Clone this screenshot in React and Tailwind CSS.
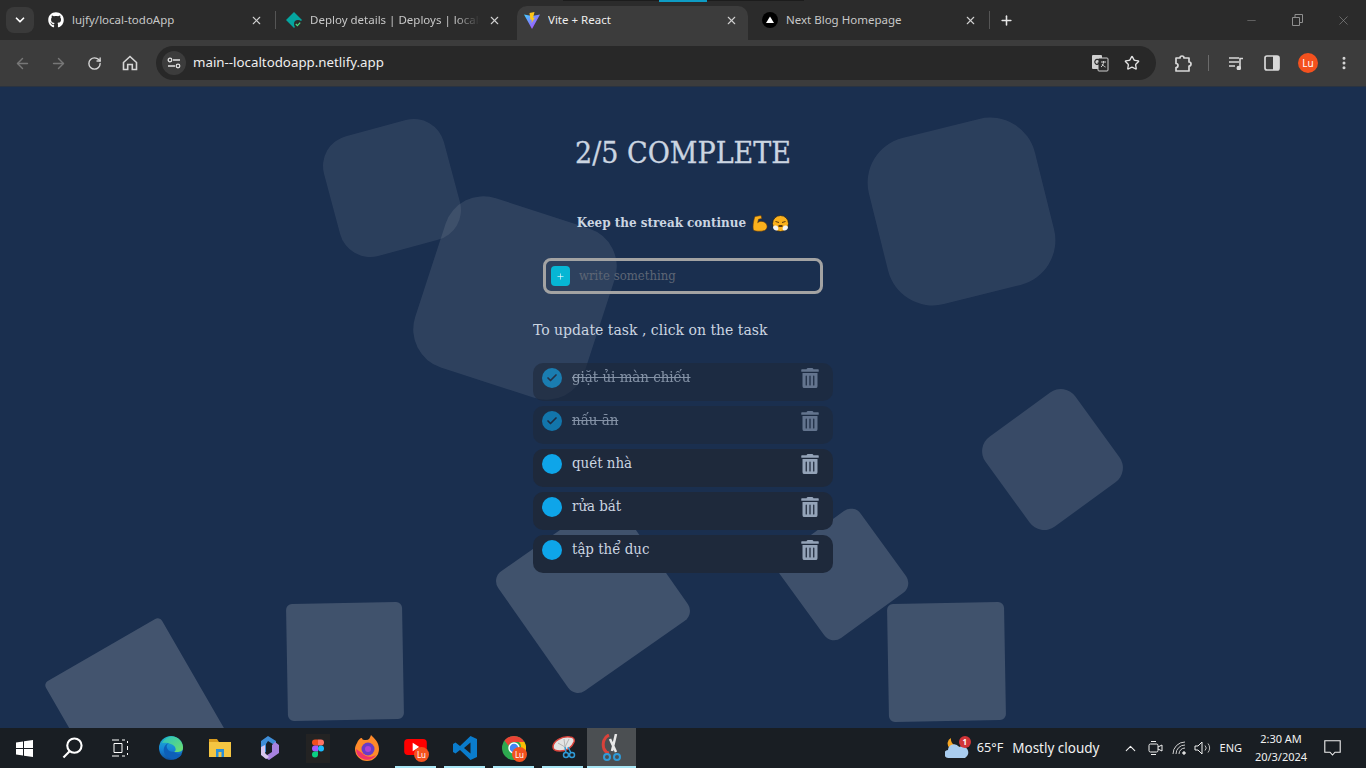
import { ArrowLeft, ArrowRight, RotateCw, Plus, X, Minus, Star, ChevronDown, ChevronUp, EllipsisVertical, Check } from 'lucide-react';
import { FaGithub, FaTrashAlt } from 'react-icons/fa';

const uiFont = 'font-["Noto_Sans",sans-serif]';
const slab = 'font-["DejaVu_Serif_Condensed","DejaVu_Serif",serif]';

const tasks = [
    { id: 1, text: 'giặt ủi màn chiếu', done: true },
    { id: 2, text: 'nấu ăn', done: true },
    { id: 3, text: 'quét nhà', done: false },
    { id: 4, text: 'rửa bát', done: false },
    { id: 5, text: 'tập thể dục', done: false },
];

function NetlifyIcon() {
    return (
        <svg width="16" height="16" viewBox="0 0 16 16" className="shrink-0">
            <path d="M8 0 16 8 8 16 0 8Z" fill="#05a5a0" />
            <circle cx="12" cy="12" r="4" fill="#2b2b2b" />
            <path d="M9.8 12l1.6 1.6 2.8-3" stroke="#4ade80" strokeWidth="1.3" fill="none" />
        </svg>
    );
}

function ViteIcon() {
    return (
        <svg width="16" height="17" viewBox="0 0 16 17" className="shrink-0">
            <defs>
                <linearGradient id="vitePurple" x1="0" y1="0" x2="1" y2="1">
                    <stop offset="0" stopColor="#41d1ff" />
                    <stop offset="1" stopColor="#bd34fe" />
                </linearGradient>
            </defs>
            <path d="M0 2.500 8 4 16 2.500 8 17Z" fill="url(#vitePurple)" />
            <path d="M10.500 0 5.500 1 6.500 8 8 7.500 7.500 11 11 5.500 9 6Z" fill="#ffc517" />
        </svg>
    );
}

function NextIcon() {
    return (
        <svg width="16" height="16" viewBox="0 0 16 16" className="shrink-0">
            <circle cx="8" cy="8" r="8" fill="#000" />
            <path d="M8 4.500 12 11H4Z" fill="#fff" />
        </svg>
    );
}

function Tab({ icon, title, active, fade, className, iconClass, closeClass, sep }) {
    return (
        <div className={`relative flex items-center h-full pb-[6px] ${className} ${active ? 'bg-[#3c3c3c] rounded-t-[10px] text-[#eeeeee]' : 'text-[#c8c8c8]'}`}>
            <span className={`flex items-center ${iconClass}`}>{icon}</span>
            <span className={`ml-[8px] text-[11.500px] whitespace-nowrap overflow-hidden flex-1 ${fade ? '[mask-image:linear-gradient(to_right,black_85%,transparent)]' : ''}`}>{title}</span>
            <X size={13} strokeWidth={2} className={`ml-[8px] shrink-0 text-[#d0d0d0] ${closeClass}`} />
            {sep && <span className="w-px h-[18px] bg-[#555] shrink-0" />}
        </div>
    );
}

function TabStrip() {
    return (
        <div className={`relative flex items-end h-[40px] bg-[#2b2b2b] ${uiFont}`}>
            <span className="absolute left-[563px] top-0 w-[241px] h-[1px] bg-[#1c1c1c]" />
            <span className="absolute left-[659px] top-0 w-[48px] h-[2px] bg-[#0e9cc4]" />
            <div className="flex items-center h-full pl-[6px] w-[34px] box-content shrink-0">
                <div className="flex items-center justify-center w-[28px] h-[26px] rounded-lg bg-[#3a3a3a]">
                    <ChevronDown size={14} strokeWidth={3} className="text-white" />
                </div>
            </div>
            <div className="flex items-center h-[34px]">
                <Tab className="w-[236px]" iconClass="ml-[8px]" closeClass="mr-[12px]" sep icon={<FaGithub size={16} className="text-white" />} title="lujfy/local-todoApp" />
                <Tab className="w-[241px]" iconClass="ml-[10px]" closeClass="mr-[16px]" fade icon={<NetlifyIcon />} title="Deploy details | Deploys | localt" />
                <Tab className="w-[231px]" iconClass="ml-[7px]" closeClass="mr-[10px]" active icon={<ViteIcon />} title="Vite + React" />
                <Tab className="w-[242px]" iconClass="ml-[14px]" closeClass="mr-[12px]" sep icon={<NextIcon />} title="Next Blog Homepage" />
                <Plus size={15} strokeWidth={2.500} className="ml-[9px] mb-[6px] text-[#e6e6e6]" />
            </div>
            <div className="flex items-center h-full ml-auto text-[#8f8f8f]">
                <div className="w-[46px] flex justify-center"><Minus size={13} strokeWidth={1} /></div>
                <div className="w-[46px] flex justify-center">
                    <svg width="11" height="12" viewBox="0 0 11 12" fill="none" stroke="currentColor"><path d="M.5 3.500h7v8h-7zM3 3V.5h7.500v8H8" /></svg>
                </div>
                <div className="w-[46px] flex justify-center"><X size={15} strokeWidth={1} /></div>
            </div>
        </div>
    );
}

function HomeIcon() {
    return (
        <svg width="16" height="16" viewBox="0 0 16 16" fill="none" stroke="#d6d6d6" strokeWidth="1.600">
            <path d="M1.500 7.500 8 1.500l6.500 6V14.500h-4.200V9.500H5.700v5H1.500Z" />
        </svg>
    );
}

function SiteTuneIcon() {
    return (
        <svg width="14" height="12" viewBox="0 0 14 12" fill="none" stroke="#e2e2e2" strokeWidth="1.300">
            <circle cx="3" cy="3" r="1.800" />
            <path d="M6 3h7M1 9h7" />
            <circle cx="11" cy="9" r="1.800" />
        </svg>
    );
}

function TranslateIcon() {
    return (
        <svg width="18" height="18" viewBox="0 0 18 18">
            <rect x="1" y="1" width="10" height="14" rx="1" fill="#cfcfcf" />
            <rect x="7" y="4" width="10" height="13" rx="1" fill="#2a2a2a" stroke="#cfcfcf" />
            <path d="M8 6a2.500 2.500 0 1 0 .5 3H6.500" stroke="#2a2a2a" strokeWidth="1.200" fill="none" />
            <path d="M10 8h5M12.500 7v1c0 2-1 4-2.500 5M11 10c1 1.500 2 2.500 3.500 3" stroke="#cfcfcf" fill="none" />
        </svg>
    );
}

function PuzzleIcon() {
    return (
        <svg width="18" height="19" viewBox="0 0 18 19" fill="none" stroke="#d8d8d8" strokeWidth="1.700">
            <path d="M2 4h4a2 2 0 0 1 4 0h5v4a2 2 0 0 1 0 4v5H2v-3.500a2 2 0 0 0 0-4Z" strokeLinejoin="round" />
        </svg>
    );
}

function MediaIcon() {
    return (
        <svg width="16" height="14" viewBox="0 0 16 14" fill="none" stroke="#d8d8d8" strokeWidth="1.600">
            <path d="M1 2h10M1 6h10M1 10h6" />
            <path d="M12 12V2.500h3" />
            <circle cx="10.800" cy="12" r="1.500" fill="#d8d8d8" />
        </svg>
    );
}

function SidePanelIcon() {
    return (
        <svg width="16" height="16" viewBox="0 0 16 16">
            <rect x="1" y="1" width="14" height="14" rx="2" fill="none" stroke="#d8d8d8" strokeWidth="1.700" />
            <rect x="9" y="1" width="6" height="14" fill="#d8d8d8" />
        </svg>
    );
}

function Toolbar() {
    return (
        <div className={`flex items-center h-[47px] bg-[#3c3c3c] border-b border-[#2a3340] ${uiFont}`}>
            <div className="flex items-center w-[156px] shrink-0 pl-[4px]">
                <div className="w-[36px] flex justify-center"><ArrowLeft size={17} className="text-[#777]" /></div>
                <div className="w-[36px] flex justify-center"><ArrowRight size={17} className="text-[#777]" /></div>
                <div className="w-[36px] flex justify-center"><RotateCw size={15} strokeWidth={2.200} className="text-[#d6d6d6]" /></div>
                <div className="w-[36px] flex justify-center"><HomeIcon /></div>
            </div>
            <div className="flex items-center w-[1000px] h-[34px] rounded-full bg-[#282828] pl-[6px] pr-[16px]">
                <div className="flex items-center justify-center w-[24px] h-[24px] rounded-full bg-[#3c3c3c]"><SiteTuneIcon /></div>
                <span className="ml-[7px] text-[13.300px] text-[#efefef]">main--localtodoapp.netlify.app</span>
                <div className="ml-auto flex items-center gap-[15px]">
                    <TranslateIcon />
                    <Star size={16} strokeWidth={2} className="text-[#e2e2e2]" />
                </div>
            </div>
            <div className="flex items-center flex-1 pl-[18px]">
                <PuzzleIcon />
                <span className="w-px h-[16px] bg-[#6b6b6b] ml-[16px] mr-[19px]" />
                <MediaIcon />
                <div className="ml-[20px]"><SidePanelIcon /></div>
                <div className="ml-[18px] flex items-center justify-center w-[20px] h-[20px] rounded-full bg-[#f4511e] text-white text-[10px]">Lu</div>
                <EllipsisVertical size={16} strokeWidth={2.500} className="ml-[18px] text-[#d8d8d8]" />
            </div>
        </div>
    );
}

function BackgroundShapes() {
    return (
        <div className="absolute inset-0">
            <div className="absolute left-[330px] top-[39px] w-[124px] h-[124px] rounded-[31px] rotate-[-15deg] bg-white/[0.08]" />
            <div className="absolute left-[426px] top-[122px] w-[178px] h-[178px] rounded-[40px] rotate-[18deg] bg-white/[0.09]" />
            <div className="absolute left-[876px] top-[39px] w-[171px] h-[171px] rounded-[46px] rotate-[-14deg] bg-white/[0.08]" />
            <div className="absolute left-[997px] top-[317px] w-[111px] h-[111px] rounded-[18px] rotate-[-36deg] bg-white/[0.13]" />
            <div className="absolute left-[792px] top-[437px] w-[101px] h-[101px] rounded-[12px] rotate-[-36deg] bg-white/[0.16]" />
            <div className="absolute left-[520px] top-[436px] w-[146px] h-[146px] rounded-[12px] rotate-[-35deg] bg-white/[0.17]" />
            <div className="absolute left-[287px] top-[516px] w-[116px] h-[117px] rounded-[6px] rotate-[-1deg] bg-white/[0.17]" />
            <div className="absolute left-[888px] top-[516px] w-[117px] h-[118px] rounded-[6px] rotate-[-1deg] bg-white/[0.17]" />
            <div className="absolute left-[68px] top-[554px] w-[134px] h-[134px] rounded-[5px] rotate-[-30deg] bg-white/[0.18]" />
        </div>
    );
}

function MuscleEmoji() {
    return (
        <svg width="17" height="17" viewBox="0 0 17 17">
            <path d="M4 1.500 10 .5l.8 3-3.300.8-.8 3.400C8.500 5.800 12.500 6 14.500 8c2.500 2.500 2 6-1 7.500-3 1-8.500 1-10.500 0C1 14 2.500 5 4 1.500Z" fill="#fbb11c" stroke="#6b3e0a" strokeWidth=".6" />
        </svg>
    );
}

function SteamEmoji() {
    return (
        <svg width="17" height="17" viewBox="0 0 17 17">
            <circle cx="8.500" cy="8.500" r="8" fill="#fbb11c" stroke="#222" strokeWidth=".8" />
            <path d="M3.500 6.500 7 7.500M13.500 6.500 10 7.500" stroke="#5b3a10" strokeWidth="1" />
            <rect x="6.500" y="10" width="4" height="2" fill="#5b3a10" />
            <path d="M1 12c1-2 4-2 5 0 1 2 0 4-2 3.500C2 15 1 14 1 12ZM16 12c-1-2-4-2-5 0-1 2 0 4 2 3.500 2-.5 3-1.500 3-3.500Z" fill="#f4f4f4" />
        </svg>
    );
}

function TaskRow({ task }) {
    return (
        <div className={`flex items-start h-[38px] pl-[9px] pr-[13px] pt-[5px] rounded-[10px] bg-[#1e293b] ${task.done ? 'opacity-60' : ''}`}>
            <div className="flex items-center justify-center w-[20px] h-[20px] rounded-full bg-[#0ea5e9] shrink-0">
                {task.done && <Check size={12} strokeWidth={3.500} className="text-[#1e293b]" />}
            </div>
            <span className={`ml-[10px] -mt-px text-[14.900px] leading-[20px] text-[#cbd5e1] ${task.done ? 'line-through' : ''}`}>{task.text}</span>
            <FaTrashAlt size={20} className="ml-auto text-[#94a3b8]" />
        </div>
    );
}

function TodoPage() {
    return (
        <main className={`relative flex-1 overflow-hidden bg-[#1a2f4f] ${slab}`}>
            <BackgroundShapes />
            <div className="relative flex flex-col w-[300px] mx-auto pt-[48px]">
                <h1 className="text-center text-[30px] leading-[36px] text-[#cbd5e1] [-webkit-text-stroke:0.3px_#cbd5e1]">2/5 COMPLETE</h1>
                <p className="flex items-center justify-center mt-[42px] h-[20px] text-[13.300px] font-bold text-[#cbd5e1]">
                    Keep the streak continue <span className="ml-[5px]"><MuscleEmoji /></span><span className="ml-[4px]"><SteamEmoji /></span>
                </p>
                <div className="flex items-center w-[280px] h-[36px] ml-[10px] mt-[25px] pl-[5px] rounded-[8px] border-[3px] border-[#a3a3a3]">
                    <div className="flex items-center justify-center w-[19px] h-[20px] rounded-[4px] bg-[#06b6d4] shrink-0">
                        <Plus size={9} strokeWidth={2} className="text-white/80" />
                    </div>
                    <span className="ml-[9px] -mt-px text-[13px] text-[#5d6675]">write something</span>
                </div>
                <p className="mt-[26px] text-[15.600px] leading-[20px] text-[#cbd5e1]">To update task , click on the task</p>
                <div className="flex flex-col gap-[5px] mt-[23px]">
                    {tasks.map(task => <TaskRow key={task.id} task={task} />)}
                </div>
            </div>
        </main>
    );
}

function LuBadge() {
    return (
        <span className="absolute right-[11px] bottom-[6px] flex items-center justify-center w-[15px] h-[15px] rounded-full bg-[#f4511e] text-white text-[8px]">Lu</span>
    );
}

function Slot({ children, active, running }) {
    return (
        <div className={`relative flex items-center justify-center w-[49px] h-full shrink-0 ${active ? 'bg-[#4b4f52]' : ''}`}>
            {children}
            {running && <span className={`absolute bottom-0 h-[2px] bg-[#a8e6f5] ${active ? 'inset-x-0' : 'inset-x-[4px]'}`} />}
        </div>
    );
}

function TaskbarIcons() {
    return (
        <div className="flex items-center h-full">
            <div className="flex items-center justify-center w-[48px] h-full">
                <svg width="17" height="17" viewBox="0 0 17 17" fill="#fff"><path d="M0 2.500 7 1.500V8H0ZM8 1.300 17 0V8H8ZM0 9h7v6.500L0 14.500ZM8 9h9v8L8 15.700Z" /></svg>
            </div>
            <div className="flex items-center justify-center w-[48px] h-full">
                <svg width="21" height="22" viewBox="0 0 22 23" fill="none" stroke="#fff" strokeWidth="2.200"><circle cx="13" cy="9" r="7.500" /><path d="M8 15 1.500 21.500" /></svg>
            </div>
            <div className="flex items-center justify-center w-[48px] h-full mr-[2px]">
                <svg width="18" height="18" viewBox="0 0 18 18" fill="none" stroke="#fff"><path d="M1 1h7M1 17h7M3 4.500h8v9H3zM11 1h3M11 17h3M16.500 2v2M16.500 7v4M16.500 14v2" /></svg>
            </div>
            <Slot>
                <svg width="24" height="24" viewBox="0 0 24 24">
                    <defs>
                        <linearGradient id="edgeBody" x1="0" y1="0" x2="0" y2="1"><stop offset="0" stopColor="#1fb6c9" /><stop offset=".55" stopColor="#1686d8" /><stop offset="1" stopColor="#0e4f9c" /></linearGradient>
                        <linearGradient id="edgeTop" x1="0" y1="0" x2="1" y2="1"><stop offset="0" stopColor="#2bc3c0" /><stop offset="1" stopColor="#6fe06b" /></linearGradient>
                    </defs>
                    <circle cx="12" cy="12" r="12" fill="url(#edgeBody)" />
                    <path d="M3 7a11 11 0 0 1 21 5c0 3-3 4-6 4h-3c2-1 2-3 1-5-2-3-8-5-13-4Z" fill="url(#edgeTop)" />
                    <path d="M15 16c-3 0-6-1-7-4-1-2 0-4 2-5-4 1-6 5-5 9 1 4 6 8 11 7 3-1 5-2 7-5-2 .5-5 0-8-2Z" fill="#0d5fb8" />
                </svg>
            </Slot>
            <Slot>
                <svg width="22" height="22" viewBox="0 0 22 22">
                    <path d="M0 2h8l2 3H0Z" fill="#d89b1e" />
                    <rect y="5" width="22" height="15" fill="#f4c542" />
                    <rect x="7" y="12" width="8" height="8" fill="#2a8fd8" />
                    <rect x="9.500" y="15" width="3" height="5" fill="#f4c542" />
                </svg>
            </Slot>
            <Slot>
                <svg width="20" height="24" viewBox="0 0 20 24">
                    <path d="M2 5 9 0l8 5v5L9 5 7 8v8l-5 3Z" fill="#3f8ed8" />
                    <path d="M16 6l4 3v8l-10 7-5-3 8-5V9Z" fill="#a782e0" />
                    <path d="M2 11v8l5 4 3-2-4-4V9Z" fill="#d8c6f0" />
                </svg>
            </Slot>
            <Slot>
                <div className="flex items-center justify-center w-[24px] h-[29px] bg-[#232323]">
                    <svg width="12" height="21" viewBox="0 0 12 18">
                        <path d="M6 0H3a3 3 0 0 0 0 6h3Z" fill="#f24e1e" />
                        <path d="M6 0h3a3 3 0 0 1 0 6H6Z" fill="#ff7262" />
                        <path d="M6 6H3a3 3 0 0 0 0 6h3Z" fill="#a259ff" />
                        <circle cx="9" cy="9" r="3" fill="#1abcfe" />
                        <path d="M6 12H3a3 3 0 1 0 3 3Z" fill="#0acf83" />
                    </svg>
                </div>
            </Slot>
            <Slot>
                <svg width="24" height="26" viewBox="0 0 24 26">
                    <path d="M2 8C3 5 5 3 7 3c0 2 2 2 4 2 3 0 4-2 5-5 3 3 8 7 8 14a12 12 0 0 1-24 0c0-2 .8-4 2-6Z" fill="#ff8a2a" />
                    <path d="M1 14a11 11 0 0 0 20 6c-5 3-11 2-14-2Z" fill="#f0326b" />
                    <circle cx="13" cy="14" r="6.500" fill="#6a3cc7" />
                    <circle cx="13" cy="14" r="3" fill="#b13fd4" />
                </svg>
            </Slot>
            <Slot running>
                <svg width="23" height="16" viewBox="0 0 24 17" className="-mt-[2px]"><rect width="24" height="17" rx="4" fill="#f00" /><path d="M9 4l7 4.500-7 4.500Z" fill="#fff" /></svg>
                <LuBadge />
            </Slot>
            <Slot running>
                <svg width="24" height="24" viewBox="0 0 24 24">
                    <path d="M17.500 0 24 3v18l-6.500 3L7 14l-4.500 3.500L0 16V8l2.500-1.500L7 10ZM17.500 6.500 11 12l6.500 5.500Z" fill="#0a7ccc" />
                </svg>
            </Slot>
            <Slot running>
                <svg width="24" height="24" viewBox="0 0 24 24">
                    <circle cx="12" cy="12" r="12" fill="#2da94f" />
                    <path d="M12 0a12 12 0 0 1 10.400 6H12a6 6 0 0 0-5.600 3.800L2.500 4.500A12 12 0 0 1 12 0Z" fill="#ea4335" />
                    <path d="M22.400 6A12 12 0 0 1 12 24l5-9a6 6 0 0 0 0-9Z" fill="#fbbc05" />
                    <circle cx="12" cy="12" r="5" fill="#4285f4" stroke="#fff" strokeWidth="1.500" />
                </svg>
                <LuBadge />
            </Slot>
            <Slot running>
                <svg width="26" height="24" viewBox="0 0 26 24" fill="none">
                    <path d="M3 11C3 5 12 0 20 1c3 0 5 2 4 5-2 5-7 9-14 9-3 0-7-1-7-4Z" fill="#e4e4e4" stroke="#d9423a" strokeWidth="1.500" />
                    <path d="M14 3l1 8M19 3l-4 8M8 7l7 4" stroke="#b5b5b5" />
                    <circle cx="16" cy="19" r="2.500" stroke="#2f9bd8" strokeWidth="1.500" />
                    <circle cx="22" cy="19" r="2.500" stroke="#2f9bd8" strokeWidth="1.500" />
                    <path d="M15 11l1 6M18 11l3 6" stroke="#2f9bd8" strokeWidth="1.500" />
                </svg>
            </Slot>
            <Slot active running>
                <svg width="22" height="28" viewBox="0 0 22 28" fill="none">
                    <path d="M8 1C3 3 1 9 3 15c1 2 3 4 5 4" stroke="#d9423a" strokeWidth="3" />
                    <path d="M15 0l-4 17M9 5l6 13" stroke="#e8e8e8" strokeWidth="2.500" />
                    <circle cx="6" cy="23" r="3" stroke="#2f9bd8" strokeWidth="2" />
                    <circle cx="16" cy="23" r="3" stroke="#2f9bd8" strokeWidth="2" />
                </svg>
            </Slot>
        </div>
    );
}

function SystemTray() {
    return (
        <div className="flex items-center h-full ml-auto text-[#f1f1f1]">
            <div className="relative w-[25px] h-[26px]">
                <svg width="25" height="26" viewBox="0 0 25 26">
                    <path d="M6 3a6 6 0 1 0 8 8 7 7 0 0 1-8-8Z" fill="#f6a623" />
                    <path d="M4 23a4 4 0 0 1-1-8 6 6 0 0 1 11-3 5.500 5.500 0 1 1 6 11Z" fill="#a9cdf0" />
                </svg>
                <span className="absolute top-[1px] right-[-1px] flex items-center justify-center w-[12px] h-[12px] rounded-full bg-[#d13438] text-[8px] font-bold text-white">1</span>
            </div>
            <span className="ml-[7px] text-[12.700px]">65°F</span>
            <span className="ml-[9px] text-[13.500px]">Mostly cloudy</span>
            <ChevronUp size={17} strokeWidth={1.500} className="ml-[22px]" />
            <svg width="15" height="16" viewBox="0 0 15 16" fill="none" stroke="#f1f1f1" className="ml-[9px]">
                <rect x="1" y="4" width="9" height="8" rx="1.500" />
                <path d="M10 7l4-2v6l-4-2M3 1.500h5M3 14.500h5" />
            </svg>
            <svg width="16" height="14" viewBox="0 0 16 14" fill="none" stroke="#cfcfcf" className="ml-[9px]">
                <path d="M1 13A12 12 0 0 1 13 1M4 13a9 9 0 0 1 9-9M7 13a6 6 0 0 1 6-6" />
                <circle cx="12" cy="12" r="1.300" fill="#f1f1f1" />
            </svg>
            <svg width="17" height="14" viewBox="0 0 17 14" fill="none" stroke="#f1f1f1" className="ml-[6px]">
                <path d="M1 5h3l4-4v12l-4-4H1Z" />
                <path d="M11 4.500a3.500 3.500 0 0 1 0 5M14 2.500a7 7 0 0 1 0 9" stroke="#bdbdbd" />
            </svg>
            <span className="ml-[9px] text-[11px]">ENG</span>
            <div className="flex flex-col items-center w-[60px] ml-[9px] text-[11px] leading-[18px]">
                <span>2:30 AM</span>
                <span>20/3/2024</span>
            </div>
            <svg width="17" height="16" viewBox="0 0 17 16" fill="none" stroke="#f1f1f1" strokeWidth="1.100" className="ml-[13px] mr-[25px]">
                <path d="M.8.800h15.400v11.400h-5.200L8.500 15 6 12.200H.8Z" />
            </svg>
        </div>
    );
}

function Taskbar() {
    return (
        <footer className={`flex items-center h-[40px] shrink-0 bg-[#191e23] ${uiFont}`}>
            <TaskbarIcons />
            <SystemTray />
        </footer>
    );
}

export default function App() {
    return (
        <div className="flex flex-col w-[1366px] h-[768px] overflow-hidden">
            <TabStrip />
            <Toolbar />
            <TodoPage />
            <Taskbar />
        </div>
    );
}
